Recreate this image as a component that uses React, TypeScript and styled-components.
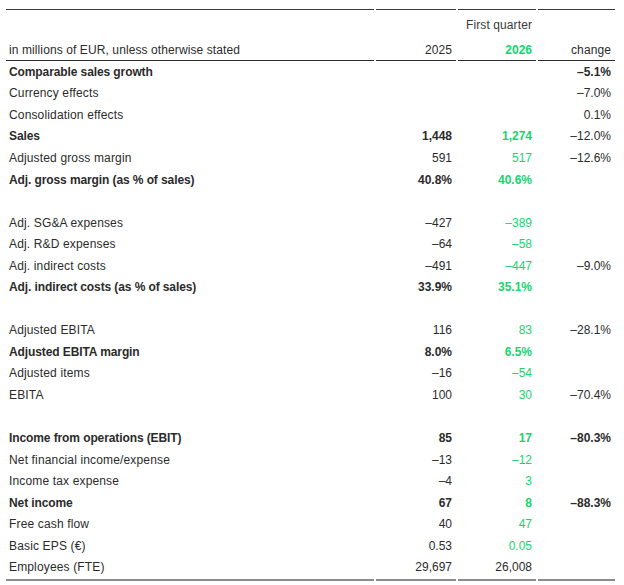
import React from 'react';
import styled, { createGlobalStyle } from 'styled-components';

const GlobalStyle = createGlobalStyle`
  html, body {
    margin: 0;
    padding: 0;
    background: #ffffff;
  }
  body {
    font-family: "Liberation Sans", Arial, sans-serif;
    color: #2b2b2b;
  }
`;

type Row = {
  label?: string;
  prev?: string;
  curr?: string;
  change?: string;
  bold?: boolean;
  boldChange?: boolean;
  plainCurr?: boolean;
};

const rows: Row[] = [
  { label: 'Comparable sales growth', change: '–5.1%', bold: true, boldChange: true },
  { label: 'Currency effects', change: '–7.0%' },
  { label: 'Consolidation effects', change: '0.1%' },
  { label: 'Sales', prev: '1,448', curr: '1,274', change: '–12.0%', bold: true },
  { label: 'Adjusted gross margin', prev: '591', curr: '517', change: '–12.6%' },
  { label: 'Adj. gross margin (as % of sales)', prev: '40.8%', curr: '40.6%', bold: true },
  {},
  { label: 'Adj. SG&A expenses', prev: '–427', curr: '–389' },
  { label: 'Adj. R&D expenses', prev: '–64', curr: '–58' },
  { label: 'Adj. indirect costs', prev: '–491', curr: '–447', change: '–9.0%' },
  { label: 'Adj. indirect costs (as % of sales)', prev: '33.9%', curr: '35.1%', bold: true },
  {},
  { label: 'Adjusted EBITA', prev: '116', curr: '83', change: '–28.1%' },
  { label: 'Adjusted EBITA margin', prev: '8.0%', curr: '6.5%', bold: true },
  { label: 'Adjusted items', prev: '–16', curr: '–54' },
  { label: 'EBITA', prev: '100', curr: '30', change: '–70.4%' },
  {},
  { label: 'Income from operations (EBIT)', prev: '85', curr: '17', change: '–80.3%', bold: true, boldChange: true },
  { label: 'Net financial income/expense', prev: '–13', curr: '–12' },
  { label: 'Income tax expense', prev: '–4', curr: '3' },
  { label: 'Net income', prev: '67', curr: '8', change: '–88.3%', bold: true, boldChange: true },
  { label: 'Free cash flow', prev: '40', curr: '47' },
  { label: 'Basic EPS (€)', prev: '0.53', curr: '0.05' },
  { label: 'Employees (FTE)', prev: '29,697', curr: '26,008', plainCurr: true },
];

const Page = styled.div`
  padding: 9px 0 0 4px;
`;

const Table = styled.table`
  width: 613px;
  table-layout: fixed;
  border-collapse: separate;
  border-spacing: 2px 0;
  font-size: 12px;
  line-height: 14px;
`;

const Col = styled.col<{ $w?: number }>`
  width: ${(p) => (p.$w ? `${p.$w}px` : 'auto')};
`;

const TopCell = styled.th`
  height: 25px;
  box-sizing: border-box;
  padding: 6px 4px 0 3px;
  border-top: 1px solid #3a3a3a;
  font-weight: 400;
  color: #3a3a3a;
  text-align: right;
  vertical-align: middle;
  white-space: nowrap;
  letter-spacing: 0.1px;
`;

const HeadCell = styled.th<{ $align?: 'left' | 'right'; $green?: boolean }>`
  height: 27px;
  box-sizing: border-box;
  padding: 6px 4px 0 3px;
  border-bottom: 1px solid #2b2b2b;
  font-weight: ${(p) => (p.$green ? 700 : 400)};
  color: ${(p) => (p.$green ? '#17d46f' : '#2b2b2b')};
  text-align: ${(p) => p.$align || 'right'};
  vertical-align: middle;
  white-space: nowrap;
  letter-spacing: ${(p) => (p.$green ? '0' : '0.1px')};
`;

const BodyRow = styled.tr<{ $last?: boolean }>`
  height: ${(p) => (p.$last ? '24px' : '21.55px')};
  td {
    padding-bottom: ${(p) => (p.$last ? '2px' : '0')};
    border-bottom: ${(p) => (p.$last ? '2px solid #8c8c8c' : 'none')};
  }
`;

const Label = styled.td<{ $bold?: boolean }>`
  padding: 0 4px 0 3px;
  font-weight: ${(p) => (p.$bold ? 700 : 400)};
  letter-spacing: ${(p) => (p.$bold ? '-0.1px' : '0.15px')};
  white-space: nowrap;
  vertical-align: middle;
`;

const Value = styled.td<{ $bold?: boolean; $green?: boolean }>`
  padding: 0 4px 0 3px;
  text-align: right;
  font-weight: ${(p) => (p.$bold ? 700 : 400)};
  color: ${(p) => (p.$green ? '#17d46f' : '#2b2b2b')};
  white-space: nowrap;
  vertical-align: middle;
`;

export default function App() {
  return (
    <Page>
      <GlobalStyle />
      <Table>
        <colgroup>
          <Col />
          <Col $w={80} />
          <Col $w={78} />
          <Col $w={77} />
        </colgroup>
        <thead>
          <tr>
            <TopCell />
            <TopCell />
            <TopCell>First quarter</TopCell>
            <TopCell />
          </tr>
          <tr>
            <HeadCell $align="left">in millions of EUR, unless otherwise stated</HeadCell>
            <HeadCell>2025</HeadCell>
            <HeadCell $green>2026</HeadCell>
            <HeadCell>change</HeadCell>
          </tr>
        </thead>
        <tbody>
          {rows.map((r, i) => (
            <BodyRow key={i} $last={i === rows.length - 1}>
              <Label $bold={r.bold}>{r.label}</Label>
              <Value $bold={r.bold}>{r.prev}</Value>
              <Value $bold={r.bold} $green={!r.plainCurr}>{r.curr}</Value>
              <Value $bold={r.boldChange}>{r.change}</Value>
            </BodyRow>
          ))}
        </tbody>
      </Table>
    </Page>
  );
}
